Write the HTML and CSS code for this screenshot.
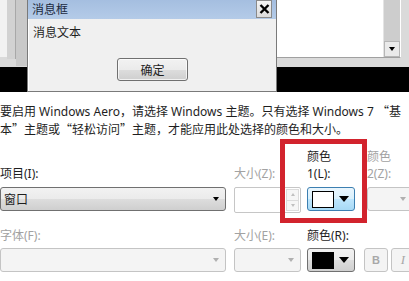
FILE: index.html
```html
<!DOCTYPE html>
<html lang="zh-CN">
<head>
<meta charset="utf-8">
<link rel="stylesheet" href="styles.css">
</head>
<body>
<div class="preview">
  <div class="backwin">
    <div class="bw-strip s1"></div>
    <div class="bw-strip s2"></div>
    <div class="bw-strip s3"></div>
    <div class="bw-content">
      <div class="scrollbar"><div class="sb-down"><span class="tri-down"></span></div></div>
    </div>
  </div>
  <div class="dialog">
    <div class="titlebar">
      <span class="title">消息框</span>
      <span class="close">
        <svg width="11" height="10" viewBox="0 0 11 10"><path d="M1.5 1 L9.5 9 M9.5 1 L1.5 9" stroke="#000" stroke-width="2.4" fill="none"/></svg>
      </span>
    </div>
    <div class="dbody">
      <div class="msg">消息文本</div>
      <div class="okrow"><div class="btn okbtn">确定</div></div>
    </div>
  </div>
</div>

<p class="desc">要启用 Windows Aero，请选择 Windows 主题。只有选择 Windows 7 <span class="q">“</span>基<br>本<span class="q">”</span>主题或<span class="q">“</span>轻松访问<span class="q">”</span>主题，才能应用此处选择的颜色和大小。</p>

<div class="form">
  <div class="lbl c1">项目(I):</div>
  <div class="lbl c2 dis">大小(Z):</div>
  <div class="lbl c3">颜色<br>1(L):</div>
  <div class="lbl c4 dis">颜色<br>2(Z):</div>

  <div class="ctl c1"><div class="combo w-item"><span>窗口</span><span class="arr"></span></div></div>
  <div class="ctl c2"><div class="spin"><div class="spin-btns"><span class="sa up"></span><span class="sa dn"></span></div></div></div>
  <div class="ctl c3"><div class="colorbtn hot"><span class="swatch white"></span><span class="arr"></span></div></div>
  <div class="ctl c4"><div class="dcombo w-c2"><span class="arr gray"></span></div></div>

  <div class="lbl2 c1 dis">字体(F):</div>
  <div class="lbl2 c2 dis">大小(E):</div>
  <div class="lbl2 c3">颜色(R):</div>
  <div class="lbl2 c4"></div>

  <div class="ctl2 c1"><div class="dcombo w-item"><span class="arr gray"></span></div></div>
  <div class="ctl2 c2"><div class="dcombo w-size"><span class="arr gray"></span></div></div>
  <div class="ctl2 c3"><div class="colorbtn"><span class="swatch black"></span><span class="arr"></span></div></div>
  <div class="ctl2 c4 styles"><div class="sbtn bold">B</div><div class="sbtn ital">I</div></div>
</div>

<div class="redbox"></div>
</body>
</html>
```

FILE: styles.css
```css
* { box-sizing: border-box; }
html, body { margin: 0; padding: 0; }
body {
  width: 409px;
  height: 281px;
  overflow: hidden;
  background: #fff;
  position: relative;
  font-family: "Noto Sans", "Noto Sans CJK SC", sans-serif;
  font-size: 12px;
  color: #1e1e1e;
}

/* ---------- preview ---------- */
.preview {
  position: relative;
  height: 92px;
  background: #000;
  overflow: hidden;
}
.backwin {
  position: absolute;
  left: 0; top: 0;
  width: 409px;
  height: 67px;
  background: #dadada;
}
.bw-strip { position: absolute; top: 0; }
.s1 { left: 0; width: 7px; height: 57px; background: #f2f2f2; }
.s2 { left: 7px; width: 9px; height: 59px; background: #d2d2d2; border-right: 1px solid #a8a8a8; }
.s3 { left: 16px; width: 12px; height: 66px; background: #c9c9c9; border-right: 1px solid #9a9a9a; }
.bw-content {
  position: absolute;
  left: 28px; top: 0;
  width: 373px;
  height: 58px;
  background: #fff;
  border-bottom: 1px solid #a0a0a0;
  border-right: 1px solid #fff;
}
.scrollbar {
  position: absolute;
  right: 0; top: 0;
  width: 17px; height: 57px;
  background: #cdcdcd;
  border-left: 1px solid #e4e4e4;
}
.sb-down {
  position: absolute;
  left: 0; bottom: 0;
  width: 16px; height: 16px;
  background: #eaeaea;
  border: 1px solid #b6b6b6;
  display: flex; align-items: center; justify-content: center;
}
.tri-down {
  width: 0; height: 0;
  border-left: 3.5px solid transparent;
  border-right: 3.5px solid transparent;
  border-top: 4px solid #000;
}

.dialog {
  position: absolute;
  left: 27px; top: -2px;
  width: 250px;
  height: 94px;
  background: #f0f0f0;
  border: 1px solid #7a7a7a;
  border-top: none;
  box-shadow: inset 1px 0 0 #fff;
  display: flex;
  flex-direction: column;
}
.titlebar {
  height: 21px;
  background: linear-gradient(#a3bddf, #b4cbe8);
  display: flex;
  align-items: center;
  justify-content: space-between;
  padding: 1px 4px 0 4px;
  color: #1a2a40;
  font-size: 12px;
}
.close {
  width: 16px; height: 18px;
  margin-top: -1px;
  background: linear-gradient(#f4f4f4, #dcdcdc);
  border: 1px solid #8a8a8a;
  display: flex; align-items: center; justify-content: center;
}
.dbody {
  flex: 1;
  padding: 5px 5px 0 5px;
  display: flex;
  flex-direction: column;
}
.msg { line-height: 17px; }
.okrow { display: flex; padding-left: 84px; margin-top: 17px; }
.btn {
  border: 1px solid #707070;
  border-radius: 3px;
  background: linear-gradient(#f2f2f2 0%, #ebebeb 50%, #dddddd 51%, #cfcfcf 100%);
  box-shadow: inset 0 0 0 1px rgba(255,255,255,0.7);
}
.okbtn {
  width: 71px; height: 23px;
  display: flex; align-items: center; justify-content: center;
}

/* ---------- description ---------- */
.desc {
  margin: 10px 0 0 0;
  line-height: 17px;
  white-space: nowrap;
}
.q { font-family: "Noto Sans CJK SC", sans-serif; }

/* ---------- form ---------- */
.form {
  margin-top: 10px;
  display: grid;
  grid-template-columns: 234px 73px 58px 1fr;
  grid-template-rows: 39px 24px 37px 24px;
}
.form .lbl, .form .lbl2 { line-height: 17px; align-self: end; white-space: nowrap; }
.lbl { padding-bottom: 5px; }
.lbl2 { padding-bottom: 4px; }
.lbl.c4 { padding-left: 2px; }
.dis { color: #a2a2a2; }
.c1 { grid-column: 1; }
.c2 { grid-column: 2; }
.c3 { grid-column: 3; }
.c4 { grid-column: 4; }

.combo, .dcombo {
  height: 24px;
  border-radius: 3px;
  display: flex;
  align-items: center;
  justify-content: space-between;
  padding: 0 6px 0 3px;
}
.combo {
  border: 1px solid #707070;
  background: linear-gradient(#f2f2f2 0%, #ebebeb 50%, #dddddd 51%, #cfcfcf 100%);
}
.dcombo {
  border: 1px solid #c4c4c4;
  background: #f4f4f4;
  justify-content: flex-end;
}
.w-item { width: 226px; }
.w-size { width: 67px; }
.w-c2 { width: 46px; margin-left: 2px; }
.arr {
  width: 0; height: 0;
  border-left: 3.5px solid transparent;
  border-right: 3.5px solid transparent;
  border-top: 4px solid #000;
}
.arr.gray { border-top-color: #b0b0b0; }

.spin {
  width: 67px; height: 26px;
  border: 1px solid #c6c6c6;
  background: #fff;
  border-radius: 2px;
  display: flex;
  justify-content: flex-end;
  padding: 1px;
}
.spin-btns {
  width: 13px;
  display: flex; flex-direction: column;
  border: 1px solid #dcdcdc;
  background: #f6f6f6;
}
.sa { flex: 1; display: flex; align-items: center; justify-content: center; }
.sa.up { border-bottom: 1px solid #dcdcdc; }
.sa.up::after {
  content: ""; border-left: 2.5px solid transparent; border-right: 2.5px solid transparent;
  border-bottom: 3px solid #c0c0c0;
}
.sa.dn::after {
  content: ""; border-left: 2.5px solid transparent; border-right: 2.5px solid transparent;
  border-top: 3px solid #c0c0c0;
}

.colorbtn {
  width: 48px; height: 24px;
  border: 1px solid #707070;
  border-radius: 3px;
  background: linear-gradient(#f2f2f2 0%, #ebebeb 50%, #dddddd 51%, #cfcfcf 100%);
  display: flex; align-items: center;
  padding: 0 5px 0 4px;
  gap: 5px;
}
.colorbtn.hot {
  border-color: #3c7fb1;
  background: linear-gradient(#eaf6fd 0%, #d9f0fc 50%, #bee6fd 51%, #a7d9f5 100%);
}
.swatch { width: 24px; height: 17px; border: 1px solid #000; }
.swatch.white { background: #fff; }
.swatch.black { background: #000; }
.colorbtn .arr {
  border-left-width: 5px; border-right-width: 5px; border-top-width: 6px;
}

.styles { display: flex; gap: 3px; margin-left: -1px; }
.sbtn {
  width: 24px; height: 24px;
  border: 1px solid #c4c4c4;
  border-radius: 3px;
  background: #f4f4f4;
  color: #a8a8a8;
  display: flex; align-items: center; justify-content: center;
}
.sbtn.bold { font-weight: bold; font-family: "Liberation Sans", sans-serif; font-size: 11px; }
.sbtn.ital { font-style: italic; font-family: "Liberation Serif", serif; font-size: 13px; }

.redbox {
  position: absolute;
  left: 280px; top: 139px;
  width: 87px; height: 84px;
  border: 5px solid #d2232d;
}
```
